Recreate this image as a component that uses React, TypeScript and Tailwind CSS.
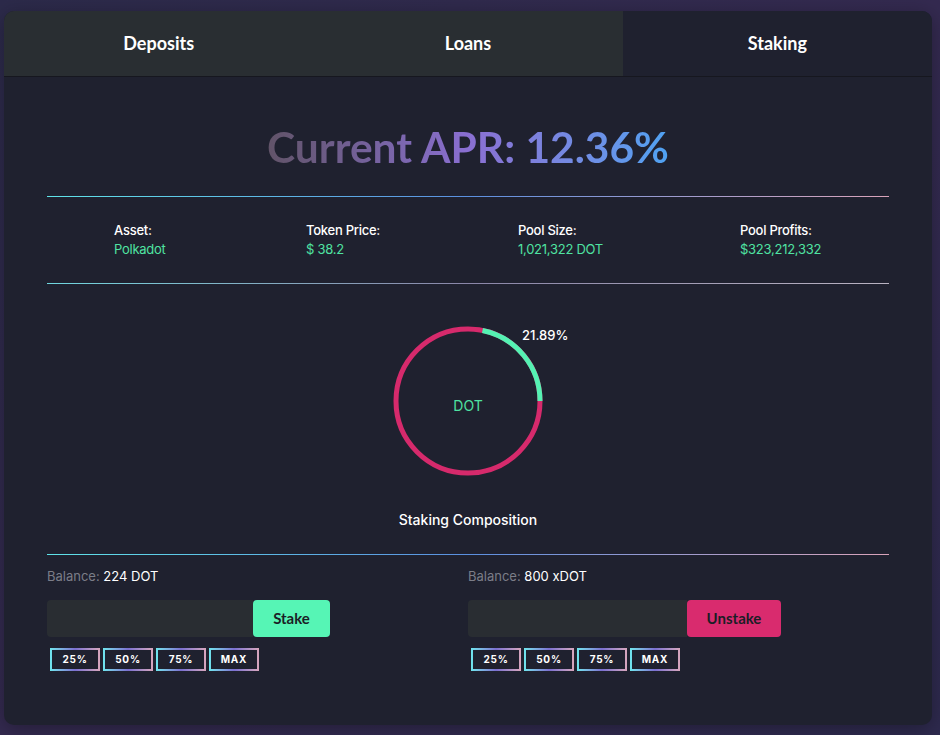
import React from 'react';

const lato = { fontFamily: 'Lato, "Noto Sans", sans-serif' };

const GlowDivider = () => (
  <div className="h-px w-full bg-gradient-to-r from-[#5fe3e8] via-[#5a8fe0] to-[#d9a3b9]" />
);

const GreyDivider = () => (
  <div className="h-px w-full bg-gradient-to-r from-[#6fd7df] via-[#8a86a8] to-[#b9b3c2]" />
);

const Stat = ({ label, value }: { label: string; value: string }) => (
  <div className="flex flex-col gap-[3px] text-[13px] leading-4">
    <span className="font-medium tracking-[-0.02em] text-white">{label}</span>
    <span className="tracking-[-0.02em] text-[#4fe3a2]">{value}</span>
  </div>
);

const PctButtons = () => (
  <div className="flex gap-[3px] pl-[3px]">
    {['25%', '50%', '75%', 'MAX'].map((p) => (
      <div key={p} className="bg-gradient-to-r from-[#6ee6ee] via-[#7b6fd0] to-[#d8a6bd] p-[2px]">
        <button
          type="button"
          className="flex h-[19px] w-[46px] items-center justify-center bg-[#1f212f] text-[10px] font-bold tracking-[0.08em] text-white"
        >
          {p}
        </button>
      </div>
    ))}
  </div>
);

const Donut = () => {
  const r = 72;
  const c = 2 * Math.PI * r;
  const pct = 0.2189;
  // green arc ends at 3 o'clock, so it starts (0.25 - pct) past the top
  return (
    <div className="relative h-[154px] w-[154px]">
      <svg width="154" height="154" viewBox="0 0 154 154">
        <circle cx="77" cy="77" r={r} fill="none" stroke="#d62a6c" strokeWidth="5" />
        <circle
          cx="77"
          cy="77"
          r={r}
          fill="none"
          stroke="#55f2b3"
          strokeWidth="5"
          strokeDasharray={`${c * pct} ${c}`}
          strokeDashoffset={-c * (1 - pct)}
        />
      </svg>
      <span className="absolute inset-0 flex items-center justify-center pt-[8px] text-[14px] text-[#4fe3a2]">DOT</span>
      <span className="absolute left-[131px] top-[2px] text-[13px] font-medium text-white">21.89%</span>
    </div>
  );
};

const Action = ({
  balance,
  label,
  inputW,
  btnW,
  btnClass,
}: {
  balance: string;
  label: string;
  inputW: string;
  btnW: string;
  btnClass: string;
}) => (
  <div className="flex flex-col">
    <p className="text-[13px]">
      <span className="text-[#7b7d88]">Balance:</span> <span className="text-white">{balance}</span>
    </p>
    <div className="mt-[13px] flex h-[37px]">
      <input className={`h-full rounded-l-[4px] bg-[#292d32] outline-none ${inputW}`} />
      <button type="button" className={`h-full rounded-[4px] text-[15px] font-bold text-[#1b1e26] ${btnW} ${btnClass}`} style={lato}>
        {label}
      </button>
    </div>
    <div className="mt-[11px]">
      <PctButtons />
    </div>
  </div>
);

export default function App() {
  return (
    <div
      className="min-h-[735px] w-full bg-gradient-to-br from-[#2c2a4a] via-[#342a50] to-[#2e2a4e] px-[4px] pt-[11px] pb-[10px]"
      style={{ fontFamily: 'Inter, "Noto Sans", sans-serif' }}
    >
      <div className="w-[928px] overflow-hidden rounded-[10px] bg-[#1f212f] shadow-[0_4px_20px_rgba(0,0,0,0.3)]">
        <div className="grid h-[66px] grid-cols-3 border-b border-[#16171f]" style={lato}>
          <button type="button" className="bg-[#292e32] text-[18px] font-bold text-white">Deposits</button>
          <button type="button" className="bg-[#292e32] text-[18px] font-bold text-white">Loans</button>
          <button type="button" className="bg-[#1f212f] text-[18px] font-bold text-white">Staking</button>
        </div>

        <div className="px-[43px] pb-[54px]">
          <h1 className="pt-[44px] pb-[23px] text-center text-[42.5px] leading-[52px] font-bold" style={lato}>
            <span className="bg-gradient-to-r from-[#615368] via-[#8a6fd2] to-[#4ea2f2] bg-clip-text text-transparent">
              Current APR: 12.36%
            </span>
          </h1>
          <GlowDivider />

          <div className="grid grid-cols-[192px_212px_222px_1fr] pt-[25px] pb-[26px] pl-[67px]">
            <Stat label="Asset:" value="Polkadot" />
            <Stat label="Token Price:" value="$ 38.2" />
            <Stat label="Pool Size:" value="1,021,322 DOT" />
            <Stat label="Pool Profits:" value="$323,212,332" />
          </div>
          <GreyDivider />

          <div className="flex flex-col items-center pt-[40px]">
            <Donut />
            <p className="pt-[31px] text-[14px] font-medium text-white">Staking Composition</p>
          </div>

          <div className="mt-[24px]">
            <GlowDivider />
          </div>

          <div className="grid grid-cols-2 pt-[12px]">
            <Action balance="224 DOT" label="Stake" inputW="w-[206px]" btnW="w-[77px]" btnClass="bg-[#56f5b5]" />
            <Action balance="800 xDOT" label="Unstake" inputW="w-[219px]" btnW="w-[94px]" btnClass="bg-[#d92b6e]" />
          </div>
        </div>
      </div>
    </div>
  );
}
